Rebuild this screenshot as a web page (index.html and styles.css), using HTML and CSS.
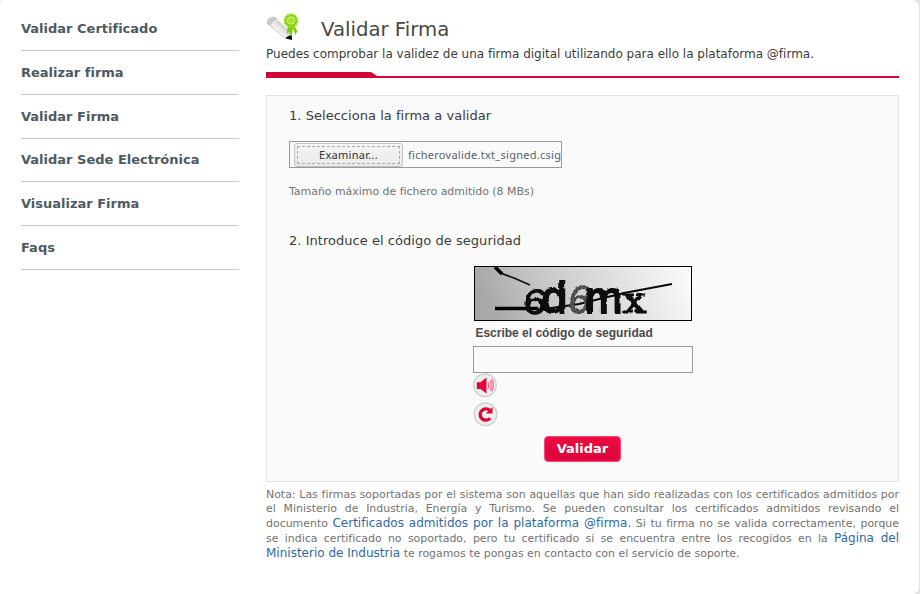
FILE: index.html
```html
<!DOCTYPE html>
<html lang="es">
<head>
<meta charset="utf-8">
<title>Validar Firma</title>
<link rel="stylesheet" href="styles.css">
</head>
<body>
<div class="page">
  <nav class="menu">
    <a>Validar Certificado</a>
    <a>Realizar firma</a>
    <a>Validar Firma</a>
    <a>Validar Sede Electrónica</a>
    <a>Visualizar Firma</a>
    <a>Faqs</a>
  </nav>
  <main class="content">
    <header class="heading">
      <svg class="heading-icon" width="34" height="28" viewBox="0 0 34 28">
        <defs>
          <linearGradient id="pen" gradientUnits="userSpaceOnUse" x1="7" y1="18" x2="16" y2="8"><stop offset="0" stop-color="#bbb"/><stop offset=".3" stop-color="#f2f2f2"/><stop offset=".65" stop-color="#ddd"/><stop offset="1" stop-color="#bbb"/></linearGradient>
        </defs>
        <path d="M1 8Q3 3 9 4L25.500 20.500 26 26.500 19 25.500 1 11Z" fill="url(#pen)"/>
        <path d="M1 8Q3 3 9 4L12 7Q7 8 5 13L1 10Z" fill="#c9c9c9"/>
        <path d="M5 13Q7 8 12 7" fill="none" stroke="#f6f6f6"/>
        <path d="M19.500 25.500Q21 22.500 26 22L26 27Z" fill="#111"/>
        <path d="M22 12L20.500 21 23 19 25.500 24 27 15 29.500 22.500 30 19.500 32 19.500 28 12Z" fill="#82c812"/>
        <circle cx="25" cy="7.700" r="6.600" fill="#8ed50f" stroke="#9cdc30" stroke-width="1.600" stroke-dasharray="1.900 1"/>
        <circle cx="25" cy="7.500" r="3.600" fill="#a5e52c" stroke="#d6f6a0" stroke-width="1"/>
      </svg>
      <h1>Validar Firma</h1>
    </header>
    <p class="intro">Puedes comprobar la validez de una firma digital utilizando para ello la plataforma @firma.</p>
    <div class="rule"><span></span></div>
    <section class="panel">
      <h2>1. Selecciona la firma a validar</h2>
      <div class="file"><span class="browse">Examinar...</span><span class="filename">ficherovalide.txt_signed.csig</span></div>
      <p class="hint">Tamaño máximo de fichero admitido (8 MBs)</p>
      <h2 class="second">2. Introduce el código de seguridad</h2>
      <div class="security">
        <svg class="captcha" width="218" height="55" viewBox="0 0 218 55">
          <defs>
            <linearGradient id="shade" x1="0" y1=".1" x2="1" y2="0"><stop offset="0" stop-color="#a8a8a8"/><stop offset=".25" stop-color="#c4c4c4"/><stop offset=".6" stop-color="#dedede"/><stop offset="1" stop-color="#fcfcfc"/></linearGradient>
            <filter id="warp" x="-10%" y="-20%" width="120%" height="140%"><feTurbulence type="turbulence" baseFrequency=".12" numOctaves="1" seed="3"/><feDisplacementMap in="SourceGraphic" scale="2" xChannelSelector="R" yChannelSelector="G"/><feGaussianBlur stdDeviation=".4"/></filter>
          </defs>
          <rect x=".5" y=".5" width="217" height="54" fill="url(#shade)" stroke="#000"/>
          <path d="M26 7L40 12 56 19" fill="none" stroke="#111" stroke-width="1.800"/>
          <path d="M21 1L28 8" stroke="#000" stroke-width="3.500"/>
          <path d="M21 42.500H64" stroke="#000" stroke-width="3.600"/>
          <path d="M64 44L105 38 150 27 198 18" fill="none" stroke="#080808" stroke-width="2"/>
          <g class="code" filter="url(#warp)">
            <text transform="translate(48 46.500) skewX(-5) scale(1.150 1)" font-size="35" stroke-width="1">6</text>
            <text transform="translate(66.500 45.500) scale(1.060 1)" font-size="44" stroke-width="1.800">d</text>
            <text transform="translate(92 45.500) skewX(-9)" font-size="39" class="hatched">6</text>
            <text x="110" y="46" font-size="45" stroke-width="2">m</text>
            <text transform="translate(148 46) scale(1.130 1)" font-size="37" class="serif">x</text>
          </g>
        </svg>
        <label for="code">Escribe el código de seguridad</label>
        <input id="code" type="text">
        <div class="tools">
          <svg width="25" height="25" viewBox="0 0 25 25">
            <circle cx="12" cy="12.300" r="11.300" fill="#eee" stroke="#d0d0d0" stroke-width="1.300"/>
            <path d="M3.800 9.300H7.500L13.500 4.500V20.500L7.500 16H3.800Z" fill="#e6053a"/>
            <path d="M15 9.500Q16.800 12.300 15 15.500M17 7.500Q19.600 12.300 17 17.500M18.700 6Q22 12.300 18.700 18.500" fill="none" stroke="#ee5a7c" stroke-width="1.100"/>
          </svg>
          <svg width="25" height="25" viewBox="0 0 25 25">
            <circle cx="12.500" cy="12.300" r="11.300" fill="#eee" stroke="#d0d0d0" stroke-width="1.300"/>
            <path d="M17.200 16.200A5.700 5.700 0 1 1 17 8.600" fill="none" stroke="#dc0638" stroke-width="3.200"/>
            <path d="M19.500 5V11.500H12.800Z" fill="#dc0638"/>
          </svg>
        </div>
      </div>
      <button class="submit">Validar</button>
    </section>
    <p class="note">Nota: Las firmas soportadas por el sistema son aquellas que han sido realizadas con los certificados admitidos por el Ministerio de Industria, Energía y Turismo. Se pueden consultar los certificados admitidos revisando el documento <a>Certificados admitidos por la plataforma @firma.</a> Si tu firma no se valida correctamente, porque se indica certificado no soportado, pero tu certificado si se encuentra entre los recogidos en la <a>Página del Ministerio de Industria</a> te rogamos te pongas en contacto con el servicio de soporte.</p>
  </main>
</div>
</body>
</html>
```
FILE: styles.css
```css
* { box-sizing: border-box; }
body { margin: 0; background: #e4e4e4; font-family: "DejaVu Sans", sans-serif; }
.page { display: grid; grid-template-columns: 218px 633px; column-gap: 27px; width: 919px; height: 594px; padding: 7px 20px 0 21px; background: #fff; border-radius: 3px 7px 7px 0; overflow: hidden; }
.menu { display: flex; flex-direction: column; }
.menu a { height: 43.8px; border-bottom: 1px solid #c8c8c8; font-size: 13px; font-weight: bold; line-height: 43px; color: #4d5a62; }
.menu a:nth-child(3) { height: 44.2px; }
.menu a:nth-child(4) { height: 43.4px; line-height: 41px; }
.content { padding-top: 5px; }
.heading { display: flex; gap: 21px; height: 33px; }
.heading-icon { flex: none; margin-top: 1px; }
h1 { margin: 6px 0 0; font-size: 19.7px; font-weight: normal; line-height: 24px; color: #484848; }
.intro { margin: 0; font-size: 12px; line-height: 18px; color: #3c3c3c; white-space: nowrap; }
.rule { height: 6px; margin-top: 9px; border-bottom: 2px solid #d10339; }
.rule span { display: block; width: 111px; height: 5px; background: #d10339; clip-path: polygon(0 0, 105px 0, 111px 4px, 111px 5px, 0 5px); }
.panel { height: 387px; margin-top: 17px; padding: 11px 22px 0; border: 1px solid #e3e3e3; background: #fafafa; }
h2 { margin: 0; font-size: 13px; font-weight: normal; line-height: 18px; letter-spacing: .04px; color: #3c3c3c; }
.file { display: flex; align-items: center; width: 273px; height: 27px; margin-top: 16px; padding-left: 4px; border: 1px solid #999; overflow: hidden; font: 11px/22px "Noto Sans", sans-serif; letter-spacing: .27px; color: #56636d; white-space: nowrap; }
.browse { display: flex; flex: none; align-items: center; justify-content: center; width: 109px; height: 24px; border: 1px solid #c6c2be; border-radius: 3px; background: linear-gradient(#f7f6f5, #ebe9e7); color: #2e3436; outline: 1px dashed #aaa; outline-offset: -4px; }
.filename { margin-left: 5px; }
.hint { margin: 15px 0 0; font-size: 10.93px; line-height: 18px; color: #727272; }
.second { margin-top: 31px; }
.security { display: flex; flex-direction: column; width: 220px; margin: 16px 0 0 184px; }
.captcha { margin-left: 1px; }
.code { font-family: "Liberation Sans", sans-serif; fill: #080808; stroke: #080808; }
.hatched { fill: #555; stroke: #333; stroke-width: 1px; stroke-dasharray: 3 1; }
.serif { font-family: "DejaVu Serif", serif; stroke-width: 1.2px; }
.security label { margin: 4px 0 0 2.4px; font: bold 12px/16px "Liberation Sans", sans-serif; color: #4a4a4a; }
.security input { width: 220px; height: 27px; margin: 5px 0 0; border: 1px solid #999; background: #fafafa; }
.tools { display: flex; flex-direction: column; gap: 4px; }
.submit { display: block; width: 77px; height: 26px; margin: 9px 0 0 255px; padding: 0 0 1px; border: 1px solid #f5476d; border-radius: 4px; background: linear-gradient(#ec0b43, #d8063a); box-shadow: inset 0 0 3px 1px #ff0b47; font: bold 13px "DejaVu Sans", sans-serif; color: #fff; }
.note { margin: 6px 0 0; font-size: 10.95px; line-height: 14px; text-align: justify; color: #727272; }
.note a { font-size: 12px; color: #2f68a6; }
```
